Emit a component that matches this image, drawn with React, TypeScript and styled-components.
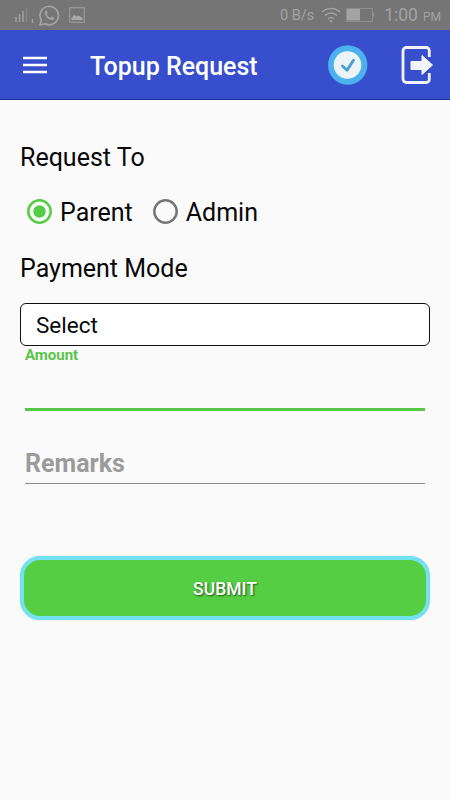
import React, { useState } from "react";
import styled, { createGlobalStyle } from "styled-components";

const GlobalStyle = createGlobalStyle`
  * { box-sizing: border-box; }
  body { margin: 0; background: #fafafa; font-family: Roboto, "Liberation Sans", sans-serif; color: #080808; }
  button { font-family: inherit; }
`;

const Screen = styled.div`
  width: 450px;
  height: 800px;
  overflow: hidden;
  background: #fafafa;
`;

const StatusBar = styled.div`
  height: 30px;
  display: flex;
  align-items: center;
  justify-content: space-between;
  padding: 0 9px 0 14px;
  background: #757575;
  color: #a3a3a3;
`;

const StatusGroup = styled.div`
  display: flex;
  align-items: center;
  svg { display: block; }
`;

const StatusIcon = styled.span<{ $gap: number }>`
  display: flex;
  margin-left: ${(p) => p.$gap}px;
`;

const StatusText = styled.span`
  padding-top: 2px;
  font-size: 14.5px;
  line-height: 28px;
`;

const Clock = styled.div`
  display: flex;
  align-items: baseline;
  gap: 5px;
  margin-left: 10px;
  padding-top: 3px;
  font-size: 17.5px;
  line-height: 27px;
`;

const Meridiem = styled.span`
  font-size: 12px;
`;

const AppBar = styled.header`
  height: 70px;
  display: flex;
  align-items: center;
  padding: 0 15px 0 23px;
  background: #374fcd;
  border-bottom: 1px solid #1c2f9c;
  color: #fff;
`;

const IconButton = styled.button<{ $gap?: number }>`
  display: flex;
  padding: 0;
  border: 0;
  background: none;
  margin-left: ${(p) => p.$gap ?? 0}px;
`;

const Title = styled.h1`
  flex: 1;
  margin: 5px 0 0 43px;
  font-size: 25px;
  font-weight: 500;
  line-height: 30px;
`;

const Form = styled.main`
  display: flex;
  flex-direction: column;
  padding: 43px 20px 0;
`;

const SectionLabel = styled.h2`
  margin: 0;
  font-size: 25px;
  font-weight: 400;
  line-height: 30px;
`;

const RadioGroup = styled.div`
  display: flex;
  gap: 20px;
  margin: 25px 0 26px 7px;
`;

const RadioOption = styled.label`
  display: flex;
  align-items: center;
  gap: 8px;
  height: 30px;
  font-size: 25px;
  line-height: 30px;
`;

const RadioMark = styled.svg<{ $on: boolean }>`
  width: 25px;
  height: 25px;
  margin-top: -3px;
  color: ${(p) => (p.$on ? "#55cd45" : "#757575")};
`;

const HiddenRadio = styled.input`
  display: none;
`;

const SelectBox = styled.div`
  height: 43px;
  margin-top: 19px;
  padding: 1px 0 0 15px;
  border: 1px solid #111;
  border-radius: 6px;
  background: #fff;
  font-size: 22.5px;
  line-height: 40px;
`;

const Field = styled.div<{ $active?: boolean }>`
  margin: 0 5px;
  height: ${(p) => (p.$active ? 65 : 73)}px;
  display: flex;
  flex-direction: column;
  justify-content: ${(p) => (p.$active ? "flex-start" : "flex-end")};
  padding-bottom: ${(p) => (p.$active ? 0 : 4)}px;
  border-bottom: ${(p) => (p.$active ? "3px solid #55c945" : "1px solid #8a8a8a")};
  color: ${(p) => (p.$active ? "#5ac44c" : "#9b9b9b")};
  font-size: ${(p) => (p.$active ? 15 : 25)}px;
  line-height: ${(p) => (p.$active ? 18 : 30)}px;
  font-weight: 700;
`;

const SubmitButton = styled.button`
  height: 64px;
  margin-top: 72px;
  padding: 2px 0 0;
  border: 4px solid #72e1f0;
  border-radius: 20px;
  background: #55ce44;
  color: #fff;
  font-size: 17.5px;
  font-weight: 500;
  text-shadow: 1px 1px 2px rgba(0, 0, 0, 0.6);
  box-shadow: 0 0 2px rgba(0, 0, 0, 0.12);
`;

const SignalIcon = () => (
  <svg width="20" height="18" viewBox="0 0 20 18" stroke="#a0a0a0" strokeWidth="1.5">
    <path d="M2 11v5M5.5 8v8M9 5v11M18.5 13v4" />
    <path d="M12.5 2v14" opacity=".35" />
  </svg>
);

const WhatsAppIcon = () => (
  <svg width="21" height="21" viewBox="0 0 21 21">
    <path d="M1 20l1.3-4.8A9.2 9.2 0 1 1 6 18.7Z" fill="none" stroke="#a3a3a3" strokeWidth="1.7" strokeLinejoin="round" />
    <path d="M7 5.5c-1 .5-1.5 1.6-1.2 2.9.8 3.5 3.6 6.1 7 6.7 1.2.2 2.6-.9 2.7-2.2l-2.9-1.5-1.3 1.4c-1.9-.8-3-2-3.7-3.6l1.1-1.2-1-2.5Z" fill="#a3a3a3" />
  </svg>
);

const PictureIcon = () => (
  <svg width="16" height="16" viewBox="0 0 16 16">
    <rect x=".7" y=".7" width="14.6" height="14.6" fill="none" stroke="#999" strokeWidth="1.2" />
    <path d="M2.5 13V10.5l3-2.5 2 1.5 2-1 4 2.5v2Z" fill="#a8a8a8" />
  </svg>
);

const WifiIcon = () => (
  <svg width="20" height="16" viewBox="0 0 20 16" fill="none" stroke="#a3a3a3" strokeWidth="1.5">
    <path d="M1 5C6 .2 14 .2 19 5M4 8.5c3.5-3.2 8.5-3.2 12 0M7 12c1.8-1.7 4.2-1.7 6 0" />
    <circle cx="10" cy="14.2" r="1.2" fill="#a3a3a3" stroke="none" />
  </svg>
);

const BatteryIcon = () => (
  <svg width="28" height="15" viewBox="0 0 28 15">
    <path d="M.5 .5h26v13H.5Z" fill="none" stroke="#8e8e8e" />
    <path d="M27.5 4.5v5" stroke="#8e8e8e" />
    <path d="M1 1h13v11.5H1Z" fill="#a3a3a3" />
  </svg>
);

const MenuIcon = () => (
  <svg width="24" height="18" viewBox="0 0 24 18" stroke="#fff" strokeWidth="2.6">
    <path d="M0 2h24M0 9h24M0 16h24" />
  </svg>
);

const VerifiedIcon = () => (
  <svg width="40" height="40" viewBox="0 0 40 40">
    <circle cx="19.7" cy="20" r="19.7" fill="#4bb2ee" />
    <circle cx="19.5" cy="20" r="13.8" fill="#edf4f7" />
    <path d="M14.5 21l4.5 4.3 6.5-10" fill="none" stroke="#4c9ed3" strokeWidth="2.9" strokeLinecap="round" strokeLinejoin="round" />
  </svg>
);

const LogoutIcon = () => (
  <svg width="34" height="40" viewBox="0 0 34 40">
    <path d="M28.3 12V5.5a3 3 0 0 0-3-3H5.5a3.5 3.5 0 0 0-3.5 3.5v28A3.5 3.5 0 0 0 5.5 37.5H25.3a3 3 0 0 0 3-3V28" fill="none" stroke="#eff3fd" strokeWidth="2.8" />
    <path d="M10 16.5h11v-6L31.5 20 21 29.5v-5H10Z" fill="#f2f4fb" stroke="#f2f4fb" strokeLinejoin="round" />
  </svg>
);

export default function App() {
  const [target, setTarget] = useState("Parent");
  return (
    <>
      <GlobalStyle />
      <Screen>
        <StatusBar>
          <StatusGroup>
            <SignalIcon />
            <StatusIcon $gap={5}><WhatsAppIcon /></StatusIcon>
            <StatusIcon $gap={9}><PictureIcon /></StatusIcon>
          </StatusGroup>
          <StatusGroup>
            <StatusText>0 B/s</StatusText>
            <StatusIcon $gap={7}><WifiIcon /></StatusIcon>
            <StatusIcon $gap={5}><BatteryIcon /></StatusIcon>
            <Clock>
              1:00
              <Meridiem>PM</Meridiem>
            </Clock>
          </StatusGroup>
        </StatusBar>
        <AppBar>
          <IconButton aria-label="Menu"><MenuIcon /></IconButton>
          <Title>Topup Request</Title>
          <IconButton aria-label="Verified"><VerifiedIcon /></IconButton>
          <IconButton aria-label="Log out" $gap={33}><LogoutIcon /></IconButton>
        </AppBar>
        <Form>
          <SectionLabel>Request To</SectionLabel>
          <RadioGroup>
            {["Parent", "Admin"].map((name) => (
              <RadioOption key={name}>
                <HiddenRadio type="radio" name="target" checked={target === name} onChange={() => setTarget(name)} />
                <RadioMark viewBox="0 0 25 25" $on={target === name}>
                  <circle cx="12.5" cy="12.5" r="11.2" fill="none" stroke="currentColor" strokeWidth="2.5" />
                  {target === name && <circle cx="12.5" cy="12.5" r="6.2" fill="currentColor" />}
                </RadioMark>
                {name}
              </RadioOption>
            ))}
          </RadioGroup>
          <SectionLabel>Payment Mode</SectionLabel>
          <SelectBox>Select</SelectBox>
          <Field $active>Amount</Field>
          <Field>Remarks</Field>
          <SubmitButton>SUBMIT</SubmitButton>
        </Form>
      </Screen>
    </>
  );
}
